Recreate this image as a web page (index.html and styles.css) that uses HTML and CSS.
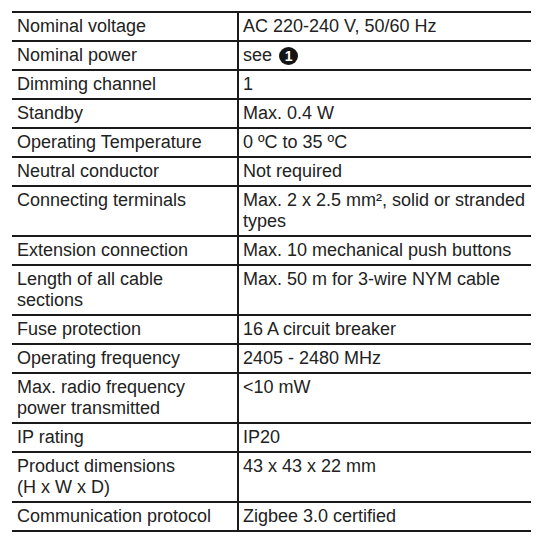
FILE: index.html
```html
<!DOCTYPE html>
<html lang="en">
<head>
<meta charset="utf-8">
<title>Technical data</title>
<link rel="stylesheet" href="styles.css">
</head>
<body>
<table class="spec">
  <colgroup><col class="col-label"><col class="col-value"></colgroup>
  <tbody>
    <tr><td>Nominal voltage</td><td>AC 220-240 V, 50/60 Hz</td></tr>
    <tr><td>Nominal power</td><td>see <span class="badge">1</span></td></tr>
    <tr><td>Dimming channel</td><td>1</td></tr>
    <tr><td>Standby</td><td>Max. 0.4 W</td></tr>
    <tr><td>Operating Temperature</td><td>0 ºC to 35 ºC</td></tr>
    <tr><td>Neutral conductor</td><td>Not required</td></tr>
    <tr><td>Connecting terminals</td><td>Max. 2 x 2.5 mm², solid or stranded types</td></tr>
    <tr><td>Extension connection</td><td>Max. 10 mechanical push buttons</td></tr>
    <tr><td>Length of all cable sections</td><td>Max. 50 m for 3-wire NYM cable</td></tr>
    <tr><td>Fuse protection</td><td>16 A circuit breaker</td></tr>
    <tr><td>Operating frequency</td><td>2405 - 2480 MHz</td></tr>
    <tr><td>Max. radio frequency power transmitted</td><td>&lt;10 mW</td></tr>
    <tr><td>IP rating</td><td>IP20</td></tr>
    <tr><td>Product dimensions<br>(H x W x D)</td><td>43 x 43 x 22 mm</td></tr>
    <tr><td>Communication protocol</td><td>Zigbee 3.0 certified</td></tr>
  </tbody>
</table>
</body>
</html>
```
FILE: styles.css
```css
html, body {
  margin: 0;
  padding: 0;
  background: #ffffff;
}

body {
  padding: 11px 0 0 12px;
  font-family: "Liberation Sans", Arial, sans-serif;
  font-size: 18px;
  color: #222222;
}

.spec {
  width: 519px;
  border-collapse: collapse;
  table-layout: fixed;
  border-top: 2px solid #1a1a1a;
}

.col-label { width: 226px; }

.spec td {
  border-bottom: 2px solid #1a1a1a;
  padding: 3px 4px 3px 5px;
  line-height: 21px;
  vertical-align: top;
}

.spec td:first-child {
  border-right: 2px solid #1a1a1a;
}

.spec td + td {
  padding-left: 4px;
}

.badge {
  display: inline-block;
  width: 19px;
  height: 18px;
  margin: 2px 0 0 2px;
  border-radius: 50%;
  background: #151515;
  color: #ffffff;
  font-weight: bold;
  font-size: 14px;
  line-height: 18px;
  text-align: center;
  vertical-align: top;
}
```
